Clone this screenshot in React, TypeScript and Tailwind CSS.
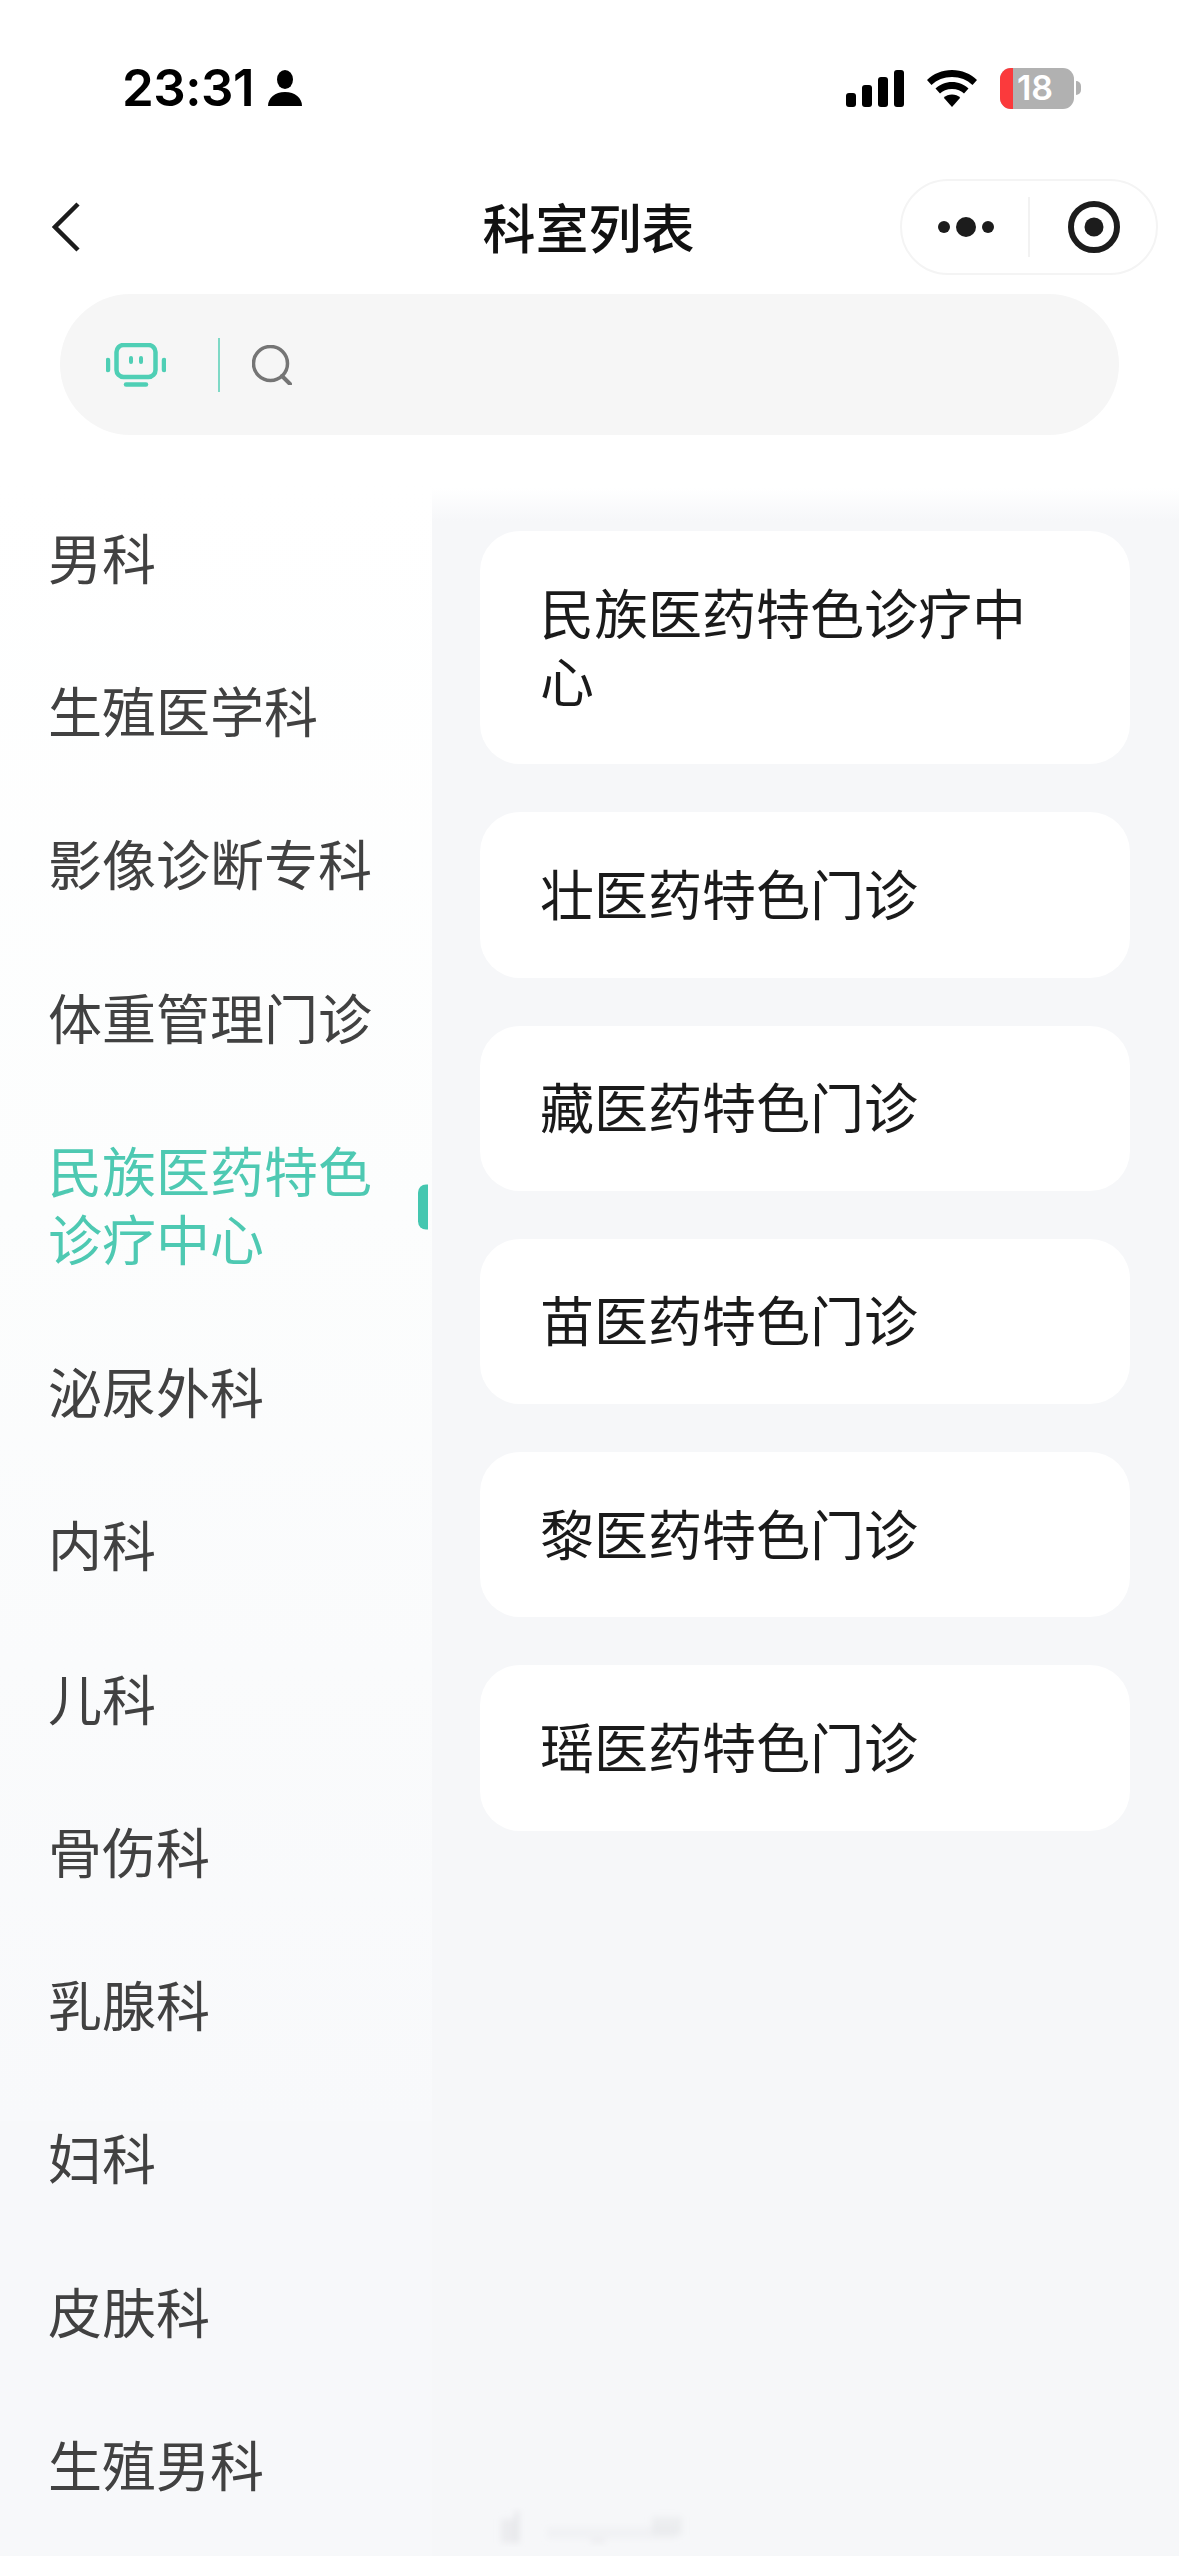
const SIDEBAR_ITEMS = [
  "男科",
  "生殖医学科",
  "影像诊断专科",
  "体重管理门诊",
  "民族医药特色诊疗中心",
  "泌尿外科",
  "内科",
  "儿科",
  "骨伤科",
  "乳腺科",
  "妇科",
  "皮肤科",
  "生殖男科",
];

const ACTIVE_ITEM = "民族医药特色诊疗中心";

const CLINICS = [
  "民族医药特色诊疗中心",
  "壮医药特色门诊",
  "藏医药特色门诊",
  "苗医药特色门诊",
  "黎医药特色门诊",
  "瑶医药特色门诊",
];

function StatusBar() {
  return (
    <div className="flex h-[179px] items-start justify-between pl-[122px] pr-[98px] pt-[67px]">
      <div className="flex h-[42px] items-center gap-[14px]">
        <span className="font-['Inter',sans-serif] text-[51px] leading-[42px] font-semibold tracking-[-0.5px] text-black">
          23:31
        </span>
        <svg width="34" height="36" viewBox="0 0 34 36" fill="#000">
          <ellipse cx="17" cy="9.500" rx="8" ry="9.500" />
          <path d="M0 36c0-8 7-14 17-14s17 6 17 14z" />
        </svg>
      </div>
      <div className="flex h-[42px] items-center gap-[23px]">
        <svg width="58" height="37" viewBox="0 0 58 37" fill="#000">
          <rect x="0" y="23" width="10" height="14" rx="3" />
          <rect x="16" y="15" width="10" height="22" rx="3" />
          <rect x="32" y="7" width="10" height="30" rx="3" />
          <rect x="48" y="0" width="10" height="37" rx="3" />
        </svg>
        <svg width="50" height="37" viewBox="0 0 50 37" fill="#000">
          <path d="M25 0c10 0 18.500 3.800 25 10l-4.500 5C40 9.800 33.200 7 25 7S10 9.800 4.500 15L0 10C6.500 3.800 15 0 25 0z" />
          <path d="M25 12c6.500 0 12 2.500 16.500 6.500l-4.500 5C34.500 21 30 19 25 19s-9.500 2-12 4.500l-4.500-5C13 14.500 18.500 12 25 12z" />
          <path d="M25 24.500c3.200 0 6 1.200 8.200 3.200L25 37l-8.200-9.300c2.200-2 5-3.200 8.200-3.200z" />
        </svg>
        <div className="flex items-center gap-[2px]">
          <div className="relative flex h-[41px] w-[74px] items-center justify-center overflow-hidden rounded-[11px] bg-[#b1b1b1]">
            <div className="absolute inset-y-0 left-0 w-[13px] bg-[#fb3a3c]" />
            <span className="relative pr-[4px] font-['Inter',sans-serif] text-[34px] leading-none font-semibold text-white">
              18
            </span>
          </div>
          <div className="h-[14px] w-[5px] rounded-r-full bg-[#b1b1b1]" />
        </div>
      </div>
    </div>
  );
}

function NavBar() {
  return (
    <div className="grid h-[96px] grid-cols-[1fr_auto_1fr] items-center">
      <div className="pl-[52px]">
        <svg width="28" height="50" viewBox="0 0 28 50" fill="none" stroke="#1c1c1c" strokeWidth="4.500">
          <path d="M26 2L3 25l23 23" />
        </svg>
      </div>
      <h1 className="mr-[2px] pb-[3px] text-[53px] leading-[68px] font-medium text-[#111]">科室列表</h1>
      <div className="flex justify-end pr-[21px]">
        <div className="flex h-[96px] w-[258px] items-center rounded-full border-2 border-[#f4f4f4] bg-white">
          <div className="flex flex-1 justify-center pl-[2px]">
            <svg width="56" height="20" viewBox="0 0 56 20" fill="#1c1c1c">
              <circle cx="6" cy="10" r="6" />
              <circle cx="28" cy="10" r="10" />
              <circle cx="50" cy="10" r="6" />
            </svg>
          </div>
          <div className="h-[60px] w-[2px] bg-[#f2f2f2]" />
          <div className="flex flex-1 justify-center pl-[3px]">
            <svg width="52" height="52" viewBox="0 0 52 52" fill="none">
              <circle cx="26" cy="26" r="23" stroke="#1c1c1c" strokeWidth="6" />
              <circle cx="26" cy="26" r="9.500" fill="#1c1c1c" />
            </svg>
          </div>
        </div>
      </div>
    </div>
  );
}

function SearchBar() {
  return (
    <div className="mt-[19px] px-[60px] pb-[48px]">
      <div className="flex h-[141px] w-[1059px] items-center rounded-full bg-[#f6f6f6] pl-[46px]">
        <svg width="60" height="44" viewBox="0 0 60 44" fill="none" stroke="#4fcfb5">
          <rect x="10.500" y="2" width="39" height="32" rx="7" strokeWidth="4.500" />
          <path d="M2 17v10M58 17v10" strokeWidth="4.500" strokeLinecap="round" />
          <path d="M25 15v4M35 15v4" strokeWidth="4" strokeLinecap="round" />
          <path d="M20 41.500h20" strokeWidth="4.500" strokeLinecap="round" />
        </svg>
        <div className="ml-[52px] h-[54px] w-[2px] bg-[#7fd9c6]" />
        <svg className="ml-[32px]" width="40" height="40" viewBox="0 0 40 40" fill="none" stroke="#757575">
          <circle cx="18.500" cy="18.500" r="17" strokeWidth="3.500" />
          <path d="M30 31l8 8" strokeWidth="4" strokeLinecap="round" />
        </svg>
      </div>
    </div>
  );
}

function Sidebar() {
  return (
    <div className="w-[432px] shrink-0 bg-[linear-gradient(180deg,#ffffff_0%,#fcfdfd_35%,#f8f9fb_79%,#f7f8fa_79%)] pl-[48px]">
      {SIDEBAR_ITEMS.map((item) => {
        const active = item === ACTIVE_ITEM;
        return (
          <div key={item} className="relative pt-[39.750px] pb-[45.500px]">
            <p className={`w-[340px] text-[54px] leading-[68px] ${active ? "text-[#4ec9b2]" : "text-[#414141]"}`}>
              {item}
            </p>
            {active && (
              <div className="absolute top-1/2 right-[4px] h-[45px] w-[10px] -translate-y-1/2 rounded-l-[8px] bg-[#45c7b0]" />
            )}
          </div>
        );
      })}
    </div>
  );
}

function ClinicList() {
  return (
    <div className="flex flex-1 flex-col gap-[48px] bg-[linear-gradient(180deg,#ffffff_5px,#f6f7f9_38px)] pt-[48px] pl-[48px] pr-[49px]">
      {CLINICS.map((name) => (
        <div key={name} className="rounded-[40px] bg-white pt-[46.500px] pb-[50.750px] pl-[60px] pr-[60px] text-[54px] leading-[68px] text-[#1a1a1a]">
          {name}
        </div>
      ))}
    </div>
  );
}

export default function App() {
  return (
    <div className="relative h-[2556px] w-[1179px] overflow-hidden bg-white font-['Noto_Sans_CJK_SC','Noto_Sans',sans-serif]">
      <StatusBar />
      <NavBar />
      <SearchBar />
      <div className="flex h-[2073px]">
        <Sidebar />
        <ClinicList />
      </div>
      {/* faint watermark at the bottom edge */}
      <svg className="absolute top-[2505px] left-[487px]" width="204" height="44" viewBox="0 0 204 44" fill="#e4e5e8">
        <defs>
          <filter id="wm-blur">
            <feGaussianBlur stdDeviation="3" />
          </filter>
        </defs>
        <g filter="url(#wm-blur)">
          <rect x="14" y="14" width="14" height="24" opacity="0.6" />
          <rect x="28" y="6" width="4" height="32" />
          <rect x="60" y="22" width="130" height="12" opacity="0.25" />
          <rect x="165" y="12" width="30" height="18" opacity="0.5" />
          <rect x="104" y="34" width="14" height="4" opacity="0.6" />
        </g>
      </svg>
    </div>
  );
}
